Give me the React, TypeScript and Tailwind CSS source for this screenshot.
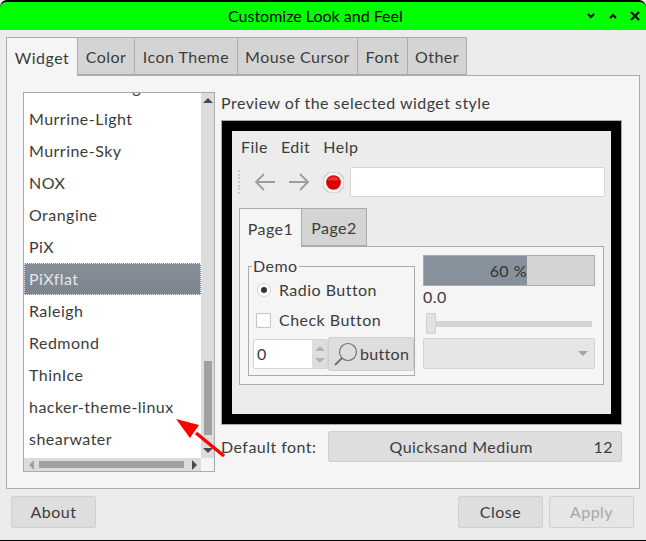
import React from 'react';

const THEMES = [
  'Murrine-Orange',
  'Murrine-Light',
  'Murrine-Sky',
  'NOX',
  'Orangine',
  'PiX',
  'PiXflat',
  'Raleigh',
  'Redmond',
  'ThinIce',
  'hacker-theme-linux',
  'shearwater',
];

const TABS = [
  { label: 'Color', width: 'w-[57px]' },
  { label: 'Icon Theme', width: 'w-[103px]' },
  { label: 'Mouse Cursor', width: 'w-[120px]' },
  { label: 'Font', width: 'w-[50px]' },
  { label: 'Other', width: 'w-[59px]' },
];

const Btn = ({ label, disabled, className }: { label: string; disabled?: boolean; className: string }) => (
  <div
    className={`flex items-center justify-center rounded-[2px] border border-[#d0d0d0] ${
      disabled ? 'bg-[#e6e6e6] text-[#a8a8a8]' : 'bg-[#dedede] text-[#3c3c3c]'
    } ${className}`}
  >
    {label}
  </div>
);

const Tri = ({ dir, color }: { dir: 'up' | 'down' | 'left' | 'right'; color: string }) => {
  const points = {
    up: '0,6 5,1 10,6',
    down: '0,1 10,1 5,6',
    left: '6,0 6,10 1,5',
    right: '1,0 1,10 6,5',
  }[dir];
  const vertical = dir === 'up' || dir === 'down';
  return (
    <svg width={vertical ? 10 : 7} height={vertical ? 7 : 10} viewBox={vertical ? '0 0 10 7' : '0 0 7 10'}>
      <polygon points={points} fill={color} />
    </svg>
  );
};

const ThemeList = () => (
  <div className="flex h-[380px] w-[192px] shrink-0 flex-col border border-[#ababab] bg-white">
    <div className="flex min-h-0 flex-1">
      <div className="min-w-0 flex-1 overflow-hidden">
        <div className="-mt-[22px]">
          {THEMES.map((name) => (
            <div
              key={name}
              className={`flex h-[32px] items-center ${
                name === 'PiXflat'
                  ? 'border border-dotted border-[#e8e8e8] bg-gradient-to-b from-[#868e98] to-[#7c848e] pl-[4px] text-[#e4e6e8]'
                  : 'pl-[5px] text-[#3c3c3c]'
              }`}
            >
              {name}
            </div>
          ))}
        </div>
      </div>
      {/* vertical scrollbar */}
      <div className="flex w-[13px] shrink-0 flex-col items-center bg-[#dcdcdc]">
        <div className="flex h-[14px] items-center">
          <Tri dir="up" color="#4a4a4a" />
        </div>
        <div className="mt-[254px] h-[74px] w-[8px] bg-[#a0a0a0]" />
        <div className="flex flex-1 items-end pb-[4px]">
          <Tri dir="down" color="#4a4a4a" />
        </div>
      </div>
    </div>
    {/* horizontal scrollbar */}
    <div className="flex h-[13px] shrink-0">
      <div className="flex flex-1 items-center bg-[#dcdcdc] pl-[4px]">
        <Tri dir="left" color="#a0a0a0" />
        <div className="ml-[4px] h-[7px] w-[145px] bg-[#a0a0a0]" />
        <div className="ml-[7px]">
          <Tri dir="right" color="#4a4a4a" />
        </div>
      </div>
      <div className="w-[13px] bg-[#f5f5f5]" />
    </div>
  </div>
);

const Toolbar = () => (
  <div className="mt-[10px] flex h-[30px] items-center pl-[5px]">
    <div className="flex h-[24px] w-[2px] flex-col justify-between">
      {[0, 1, 2, 3, 4, 5, 6].map((i) => (
        <div key={i} className="h-[2px] w-[2px] bg-[#c8c8c8]" />
      ))}
    </div>
    <svg className="ml-[14px]" width="22" height="18" viewBox="0 0 22 18" fill="none" stroke="#9c9c9c" strokeWidth="1.8">
      <path d="M21 9H2M10 1 2 9l8 8" />
    </svg>
    <svg className="ml-[12px]" width="22" height="18" viewBox="0 0 22 18" fill="none" stroke="#9c9c9c" strokeWidth="1.8">
      <path d="M1 9h19M12 1l8 8-8 8" />
    </svg>
    <svg className="ml-[13px]" width="21" height="21" viewBox="0 0 20 20">
      <polygon points="6,0 14,0 20,6 20,14 14,20 6,20 0,14 0,6" fill="#f4f4f4" stroke="#c4c4c4" />
      <circle cx="10" cy="10" r="7" fill="#dc0000" />
      <path d="M4.5 8a6 6 0 0 1 11 0" fill="#ee3030" />
    </svg>
    <div className="ml-[6px] h-[30px] w-[255px] rounded-[2px] border border-[#d4d4d4] bg-white" />
  </div>
);

const DemoGroup = () => (
  <div className="relative mt-[19px] ml-[8px] h-[110px] w-[167px] shrink-0 border border-[#ababab] pl-[4px]">
    <div className="absolute -top-[11px] left-[3px] bg-[#f5f5f5] px-px leading-[20px]">Demo</div>
    <div className="mt-[13px] flex h-[20px] items-center">
      <div className="ml-[4px] flex h-[14px] w-[14px] items-center justify-center rounded-full border border-[#d4d4d4] bg-white">
        <div className="h-[6px] w-[6px] rounded-full bg-[#333333]" />
      </div>
      <span className="ml-[8px]">Radio Button</span>
    </div>
    <div className="mt-[10px] flex h-[20px] items-center">
      <div className="ml-[3px] h-[15px] w-[15px] rounded-[1px] border border-[#c4c4c4] bg-white" />
      <span className="ml-[8px]">Check Button</span>
    </div>
    <div className="mt-[7px] flex items-center">
      <div className="flex h-[30px] w-[75px] rounded-[2px] border border-[#d4d4d4] bg-white">
        <div className="flex flex-1 items-center pl-[3px]">0</div>
        <div className="flex w-[15px] flex-col items-center justify-center gap-[5px] bg-[#dedede]">
          <Tri dir="up" color="#b4b4b4" />
          <Tri dir="down" color="#b4b4b4" />
        </div>
      </div>
      <div className="flex h-[34px] w-[86px] shrink-0 items-center rounded-[2px] border border-[#d0d0d0] bg-[#dedede] pl-[4px]">
        <svg width="26" height="26" viewBox="0 0 26 26" fill="none" stroke="#6e6e6e">
          <circle cx="15" cy="11" r="8.5" strokeWidth="1.1" />
          <path d="M9 17 2 24" strokeWidth="2" />
        </svg>
        <span className="ml-[1px] tracking-[0.3px]">button</span>
      </div>
    </div>
  </div>
);

const DemoRight = () => (
  <div className="ml-[8px] mt-[8px] w-[172px] shrink-0">
    <div className="flex h-[31px] border border-[#ababab] bg-[#d4d4d4]">
      <div className="flex w-[103px] items-center justify-end bg-[#87919c] text-[#333333]">60 %</div>
    </div>
    <div className="mt-[1px] leading-[20px]">0.0</div>
    <div className="ml-[3px] mt-[6px] flex h-[21px] items-center">
      <div className="h-[21px] w-[10px] rounded-[1px] border border-[#cfcfcf] bg-[#e2e2e2]" />
      <div className="h-[6px] w-[156px] bg-[#d4d4d4]" />
    </div>
    <div className="mt-[4px] flex h-[31px] items-center justify-end rounded-[2px] border border-[#d4d4d4] bg-[#e6e6e6] pr-[6px]">
      <Tri dir="down" color="#a4a4a4" />
    </div>
  </div>
);

const Preview = () => (
  <div className="mt-[7px] h-[305px] w-[401px] border border-[#ababab] bg-black p-[10px]">
    <div className="h-[283px] bg-[#ececec] pl-[1px] text-[#3c3c3c]">
      <div className="flex gap-[13px] pl-[8px] pt-[6px] leading-[20px]">
        <span>File</span>
        <span>Edit</span>
        <span>Help</span>
      </div>
      <Toolbar />
      <div className="ml-[6px] mt-[11px] flex">
        <div className="z-10 -mb-px flex h-[39px] w-[63px] items-center justify-center border-x border-t border-[#ababab] bg-[#f5f5f5] pt-[2px]">
          Page1
        </div>
        <div className="flex h-[38px] w-[65px] items-center justify-center border-y border-r border-[#ababab] bg-[#d4d4d4] pt-[2px]">
          Page2
        </div>
      </div>
      <div className="ml-[6px] flex h-[139px] w-[365px] border border-[#ababab] bg-[#f5f5f5]">
        <DemoGroup />
        <DemoRight />
      </div>
    </div>
  </div>
);

export default function App() {
  return (
    <div className="relative flex h-[541px] w-[646px] flex-col overflow-hidden bg-[#ececec] font-['Lato',sans-serif] text-[16px] tracking-[0.47px] text-[#3c3c3c]">
      <div className="rounded-t-[7px] bg-black pt-[2px]">
        <div className="flex h-[28px] items-center rounded-t-[6px] bg-[#00ff00] tracking-normal text-black">
          <div className="flex-1 pl-[228px]">Customize Look and Feel</div>
          <div className="flex items-center gap-[12px] pr-[6px]">
            <svg width="10" height="10" viewBox="0 0 10 10" fill="none" stroke="black" strokeWidth="2">
              <path d="M2 3l3 3 3-3" />
            </svg>
            <svg width="10" height="10" viewBox="0 0 10 10" fill="none" stroke="black" strokeWidth="2">
              <path d="M2 7l3-3 3 3" />
            </svg>
            <svg width="10" height="10" viewBox="0 0 10 10" fill="none" stroke="black" strokeWidth="2">
              <path d="M1 1l8 8M9 1 1 9" />
            </svg>
          </div>
        </div>
      </div>

      <div className="ml-[6px] mt-[7px] flex">
        <div className="z-10 -mb-px flex h-[39px] w-[72px] items-center justify-center border-x border-t border-[#ababab] bg-[#f5f5f5] pt-[2px]">
          Widget
        </div>
        {TABS.map((tab) => (
          <div
            key={tab.label}
            className={`flex h-[38px] items-center justify-center border-y border-r border-[#ababab] bg-[#d4d4d4] pt-[2px] ${tab.width}`}
          >
            {tab.label}
          </div>
        ))}
      </div>

      <div className="mx-[6px] flex h-[414px] border border-[#ababab] bg-[#f5f5f5] pl-[16px] pt-[16px]">
        <ThemeList />
        <div className="ml-[6px]">
          <div className="mt-px leading-[20px]">Preview of the selected widget style</div>
          <Preview />
          <div className="mt-[6px] flex h-[31px] items-center">
            <span className="w-[107px]">Default font:</span>
            <div className="flex h-[31px] w-[294px] items-center rounded-[2px] border border-[#d0d0d0] bg-[#dedede] pr-[8px]">
              <span className="flex-1 text-center">Quicksand Medium</span>
              <span>12</span>
            </div>
          </div>
        </div>
      </div>

      <div className="mt-[7px] flex px-[11px]">
        <Btn label="About" className="h-[32px] w-[85px]" />
        <div className="flex-1" />
        <Btn label="Close" className="h-[32px] w-[85px]" />
        <Btn label="Apply" disabled className="ml-[6px] mr-px h-[32px] w-[85px]" />
      </div>

      <div className="absolute inset-x-0 bottom-0 h-px bg-black" />

      {/* red annotation arrow */}
      <svg className="absolute left-[170px] top-[412px]" width="60" height="50" viewBox="0 0 60 50">
        <path d="M54 44 26 21" stroke="#ff0000" strokeWidth="3.4" />
        <polygon points="6,7 29,13 20,26" fill="#ff0000" />
      </svg>
    </div>
  );
}
